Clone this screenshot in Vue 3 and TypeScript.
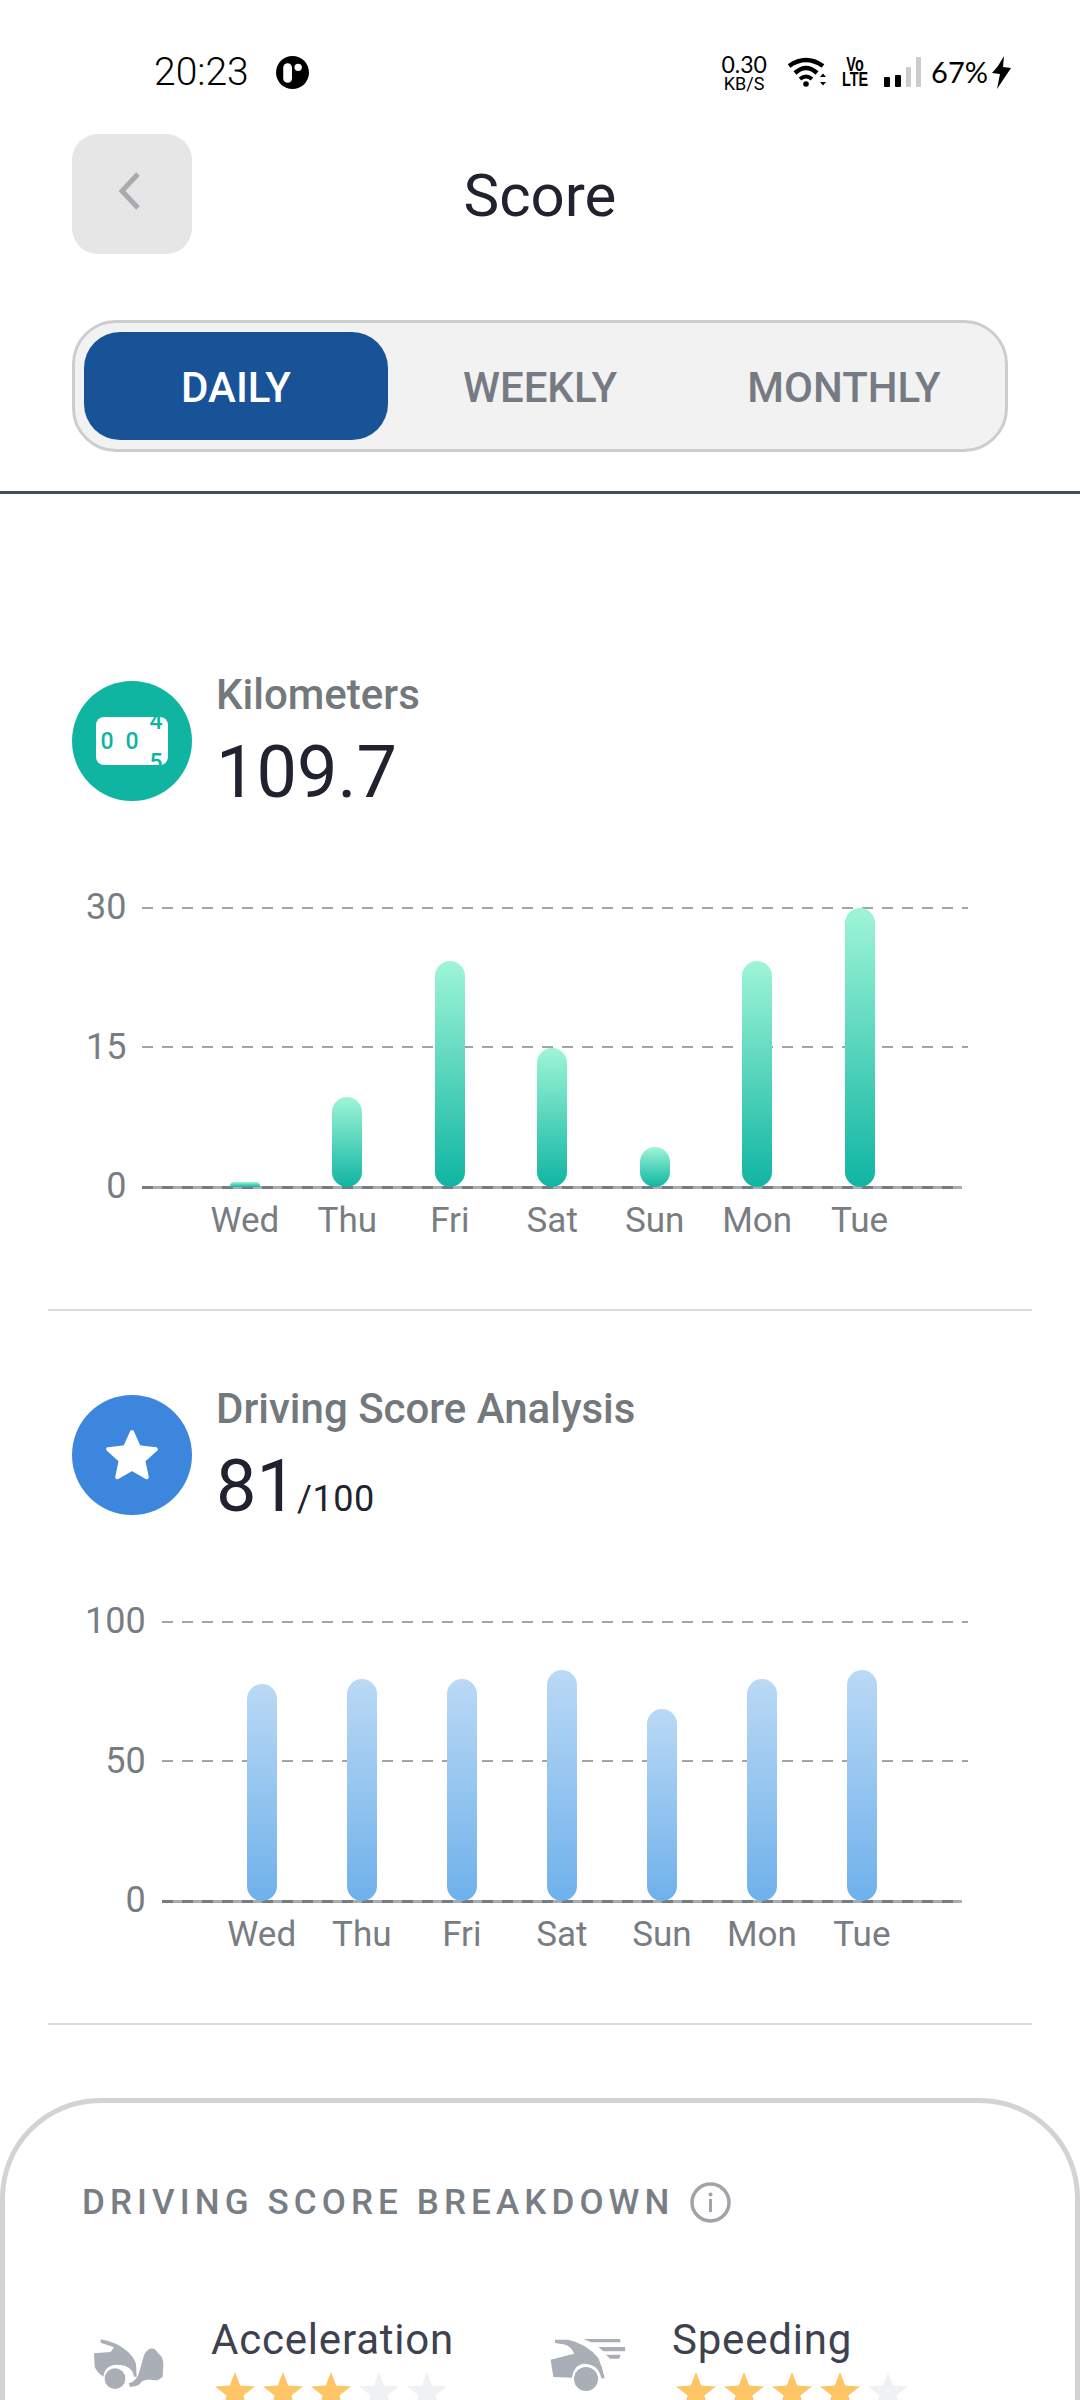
<script setup lang="ts">
interface Bar {
  day: string
  height: number
}

interface Section {
  label: string
  value: string
  unit?: string
  icon: 'odometer' | 'star'
  tone: 'teal' | 'blue'
  ticks: string[]
  bars: Bar[]
}

const tabs = ['DAILY', 'WEEKLY', 'MONTHLY']

const sections: Section[] = [
  {
    label: 'Kilometers',
    value: '109.7',
    icon: 'odometer',
    tone: 'teal',
    ticks: ['30', '15', '0'],
    bars: [
      { day: 'Wed', height: 5 },
      { day: 'Thu', height: 90 },
      { day: 'Fri', height: 226 },
      { day: 'Sat', height: 139 },
      { day: 'Sun', height: 40 },
      { day: 'Mon', height: 226 },
      { day: 'Tue', height: 279 }
    ]
  },
  {
    label: 'Driving Score Analysis',
    value: '81',
    unit: '/100',
    icon: 'star',
    tone: 'blue',
    ticks: ['100', '50', '0'],
    bars: [
      { day: 'Wed', height: 217 },
      { day: 'Thu', height: 222 },
      { day: 'Fri', height: 222 },
      { day: 'Sat', height: 231 },
      { day: 'Sun', height: 192 },
      { day: 'Mon', height: 222 },
      { day: 'Tue', height: 231 }
    ]
  }
]

const breakdown = [
  { name: 'Acceleration', stars: 3, icon: 'crash' },
  { name: 'Speeding', stars: 4, icon: 'speed' }
]
</script>

<template>
  <div class="page">
    <!-- Status bar -->
    <div class="status">
      <span class="time">20:23</span>
      <svg class="app-dot" viewBox="0 0 32 32">
        <circle cx="16" cy="16" r="16" fill="#000" />
        <rect x="7" y="7" width="8.5" height="19" rx="4.25" fill="#fff" />
        <circle cx="21.5" cy="11" r="3.6" fill="#fff" />
      </svg>
      <div class="status-right">
        <div class="speed">
          <span class="speed-num">0.30</span>
          <span class="speed-unit">KB/S</span>
        </div>
        <svg class="wifi" viewBox="0 0 40 30">
          <path d="M1 9 Q18 -3 35 9" fill="none" stroke="#000" stroke-width="4.5" />
          <path d="M7 16 Q18 6 29 16" fill="none" stroke="#000" stroke-width="4.5" />
          <path d="M12 22 Q18 17 24 22" fill="none" stroke="#000" stroke-width="4" />
          <circle cx="18" cy="27" r="2.8" fill="#000" />
          <path d="M32 20 L35 16.5 L38 20 Z M32 25 L35 28.5 L38 25 Z" fill="#000" />
        </svg>
        <div class="volte">
          <span>Vo</span>
          <span>LTE</span>
        </div>
        <div class="signal">
          <i class="s1"></i>
          <i class="s2"></i>
          <i class="s3"></i>
          <i class="s4"></i>
        </div>
        <span class="battery">67%</span>
        <svg class="bolt" viewBox="0 0 19 33">
          <path d="M12 0 L11 11 L19 12 L5 33 L8 18 L0 17 L6 10 Z" fill="#000" />
        </svg>
      </div>
    </div>

    <!-- Header -->
    <div class="header">
      <button class="back">
        <svg width="24" height="38" viewBox="0 0 24 38">
          <path d="M21 2 L5 19 L21 36" fill="none" stroke="#a7abb0" stroke-width="5" />
        </svg>
      </button>
      <h1 class="title">Score</h1>
    </div>

    <!-- Period tabs -->
    <div class="tabs">
      <div v-for="(tab, i) in tabs" :key="tab" class="tab" :class="{ active: i === 0 }">{{ tab }}</div>
    </div>
    <div class="rule"></div>

    <!-- Stat sections -->
    <section v-for="section in sections" :key="section.label" class="section">
      <div class="stat">
        <div class="stat-icon" :class="section.tone">
          <svg v-if="section.icon === 'odometer'" width="72" height="48" viewBox="0 0 72 48">
            <defs>
              <clipPath id="odo">
                <rect width="72" height="48" rx="8" />
              </clipPath>
            </defs>
            <g clip-path="url(#odo)">
              <rect width="72" height="48" fill="#fff" />
              <text x="11" y="32" class="odo-text">0</text>
              <text x="36" y="32" class="odo-text">0</text>
              <text x="60" y="12" class="odo-text">4</text>
              <text x="60" y="53" class="odo-text">5</text>
            </g>
          </svg>
          <svg v-else width="58" height="56" viewBox="0 0 56 54">
            <path
              d="M28 5 L34.6 19.6 L51 21.4 L38.8 32.2 L42.2 48.4 L28 40.2 L13.8 48.4 L17.2 32.2 L5 21.4 L21.4 19.6 Z"
              fill="#fff"
              stroke="#fff"
              stroke-width="4"
              stroke-linejoin="round"
            />
          </svg>
        </div>
        <div class="stat-text">
          <div class="stat-label">{{ section.label }}</div>
          <div class="stat-value">{{ section.value }}<span v-if="section.unit" class="stat-unit">{{ section.unit }}</span></div>
        </div>
      </div>

      <div class="chart" :class="section.tone">
        <div class="y-axis">
          <span v-for="tick in section.ticks" :key="tick" class="tick">{{ tick }}</span>
        </div>
        <div class="plot">
          <div class="grid-lines">
            <i class="grid-line"></i>
            <i class="grid-line"></i>
            <i class="grid-line base"></i>
          </div>
          <div class="bars">
            <div v-for="bar in section.bars" :key="bar.day" class="slot">
              <div class="bar" :class="{ tiny: bar.height < 10 }" :style="{ height: bar.height + 'px' }"></div>
            </div>
          </div>
        </div>
        <div class="x-axis">
          <span v-for="bar in section.bars" :key="bar.day" class="day">{{ bar.day }}</span>
        </div>
      </div>
      <div class="section-rule"></div>
    </section>

    <!-- Breakdown card -->
    <div class="card">
      <div class="card-title">
        <span>DRIVING SCORE BREAKDOWN</span>
        <svg width="41" height="41" viewBox="0 0 41 41">
          <circle cx="20.5" cy="20.5" r="18.5" fill="none" stroke="#a0a4a9" stroke-width="3.5" />
          <circle cx="20.5" cy="12.5" r="2" fill="#a0a4a9" />
          <rect x="19" y="17" width="3" height="13" fill="#a0a4a9" />
        </svg>
      </div>
      <div class="metrics">
        <div v-for="m in breakdown" :key="m.name" class="metric">
          <div class="metric-icon">
            <svg v-if="m.icon === 'crash'" width="70" height="52" viewBox="72 110 210 156">
              <path
                fill="#a9aeb7"
                d="M92 114 Q140 122 172 150 Q192 168 198 188 L200 226 L192 226 Q186 190 140 190 Q104 192 100 226 Q80 212 74 196 L72 156 L122 152 L132 138 L92 124 Z"
              />
              <circle cx="135" cy="232" r="31" fill="#a9aeb7" />
              <path
                fill="#a9aeb7"
                d="M208 212 L218 176 Q222 150 240 142 Q256 138 264 156 Q280 166 280 190 L278 226 Q264 240 246 236 Q232 232 216 240 Q206 258 180 256 L176 246 Q200 240 208 212 Z"
              />
            </svg>
            <svg v-else class="speed-car" width="75" height="54" viewBox="60 105 225 162">
              <path
                fill="#a9aeb7"
                d="M75 110 L115 110 Q170 122 205 165 Q218 195 224 226 L214 226 Q206 184 164 182 Q132 184 126 224 L70 222 L62 170 L120 155 L133 152 Q122 128 100 124 L75 120 Z"
              />
              <circle cx="168" cy="228" r="36" fill="#a9aeb7" />
              <path fill="#a9aeb7" d="M160 108 L270 108 L272 118 L184 118 Z M205 132 L285 132 L285 145 L220 145 Z M228 155 L272 155 L268 167 L240 167 Z" />
            </svg>
          </div>
          <div class="metric-body">
            <div class="metric-name">{{ m.name }}</div>
            <div class="stars">
              <svg v-for="n in 5" :key="n" class="star" :class="{ on: n <= m.stars }" viewBox="0 0 40 38">
                <path d="M20 0 L25.2 13.6 L40 14.5 L28.4 23.6 L32.4 38 L20 30 L7.6 38 L11.6 23.6 L0 14.5 L14.8 13.6 Z" />
              </svg>
            </div>
          </div>
        </div>
      </div>
    </div>
  </div>
</template>

<style>
html,
body {
  margin: 0;
  background: #fff;
}
</style>

<style scoped>
.page {
  width: 1080px;
  height: 2400px;
  overflow: hidden;
  background: #fff;
  font-family: Roboto, "Liberation Sans", sans-serif;
  color: #20232f;
}

/* status bar */
.status {
  height: 134px;
  box-sizing: border-box;
  padding: 50px 69px 0 154px;
  display: flex;
  align-items: flex-start;
}

.time {
  font-size: 39px;
  font-weight: 300;
  line-height: 44px;
  color: #000;
}

.app-dot {
  width: 33px;
  height: 33px;
  margin: 6px 0 0 27px;
}

.status-right {
  margin-left: auto;
  display: flex;
  align-items: flex-start;
}

.speed {
  width: 50px;
  display: flex;
  flex-direction: column;
  align-items: center;
  color: #000;
}

.speed-num {
  font-family: Lato, Roboto, sans-serif;
  font-size: 23px;
  line-height: 20px;
  margin-top: 4px;
}

.speed-unit {
  font-size: 18px;
  line-height: 16px;
  margin-top: 2px;
}

.wifi {
  width: 40px;
  height: 30px;
  margin: 7px 0 0 19px;
}

.volte {
  width: 24px;
  margin: 7px 0 0 15px;
  display: flex;
  flex-direction: column;
  align-items: center;
  font-family: "Liberation Sans", sans-serif;
  font-size: 20px;
  font-weight: 700;
  line-height: 15px;
  color: #000;
}

.volte span {
  transform: scaleX(0.72);
}

.signal {
  display: flex;
  align-items: flex-end;
  gap: 5px;
  height: 30px;
  margin: 7px 0 0 17px;
}

.signal i {
  display: block;
  width: 6px;
  border-radius: 1px;
  background: #000;
}

.signal .s1 {
  height: 10px;
}

.signal .s2 {
  height: 12px;
}

.signal .s3 {
  width: 5px;
  height: 20px;
  background: #ccc;
}

.signal .s4 {
  width: 5px;
  height: 30px;
  background: #ccc;
}

.battery {
  font-family: Lato, Roboto, sans-serif;
  font-size: 29px;
  line-height: 34px;
  margin: 5px 0 0 10px;
  color: #000;
}

.bolt {
  width: 19px;
  height: 33px;
  margin: 6px 0 0 4px;
}

/* header */
.header {
  display: grid;
  grid-template-columns: 120px 1fr 120px;
  align-items: center;
  padding: 0 72px;
  height: 120px;
}

.back {
  width: 120px;
  height: 120px;
  padding: 0;
  border: none;
  border-radius: 26px;
  background: #e6e6e6;
  display: flex;
  align-items: center;
  justify-content: center;
}

.back svg {
  margin: -6px 0 0 -6px;
}

.title {
  margin: 3px 0 0;
  text-align: center;
  font-size: 60px;
  font-weight: 400;
  line-height: 68px;
  color: #20232f;
}

/* tabs */
.tabs {
  margin: 66px 72px 0;
  height: 132px;
  box-sizing: border-box;
  padding: 9px;
  border: 3px solid #cdcdcd;
  border-radius: 44px;
  background: #f2f2f3;
  display: grid;
  grid-template-columns: repeat(3, 1fr);
}

.tab {
  padding-top: 2px;
  display: flex;
  align-items: center;
  justify-content: center;
  border-radius: 36px;
  font-size: 42px;
  font-weight: 500;
  color: #767b83;
}

.tab.active {
  background: #185398;
  color: #fff;
}

.rule {
  margin-top: 39px;
  height: 3px;
  background: #454d55;
}

/* stat section */
.section {
  padding-top: 84px;
}

.rule + .section {
  padding-top: 187px;
}

.stat {
  display: flex;
  gap: 24px;
  height: 120px;
  padding-left: 72px;
}

.stat-icon {
  width: 120px;
  height: 120px;
  flex: none;
  border-radius: 50%;
  display: flex;
  align-items: center;
  justify-content: center;
}

.stat-icon.teal {
  background: #10b5a2;
}

.stat-icon.blue {
  background: #3d86de;
}

.odo-text {
  font-family: Roboto, sans-serif;
  font-size: 23px;
  font-weight: 500;
  fill: #10b5a2;
  text-anchor: middle;
}

.stat-text {
  margin-top: -10px;
}

.stat-label {
  font-size: 42px;
  font-weight: 500;
  line-height: 48px;
  color: #73787d;
}

.stat-value {
  margin-top: 18px;
  font-size: 72px;
  line-height: 72px;
  color: #20232f;
}

.stat-unit {
  font-size: 36px;
  letter-spacing: 0.6px;
}

/* chart */
.chart {
  margin-top: 107px;
  padding: 0 118px 0 85px;
  display: grid;
  grid-template-columns: auto 1fr;
  column-gap: 16px;
}

.chart.teal {
  padding-left: 86px;
}

.y-axis {
  height: 279px;
  display: flex;
  flex-direction: column;
  justify-content: space-between;
  align-items: flex-end;
  transform: translateY(-1px);
}

.tick {
  height: 0;
  display: flex;
  align-items: center;
  font-size: 36px;
  color: #787d83;
}

.plot {
  position: relative;
  height: 279px;
}

.grid-lines {
  position: absolute;
  inset: 0;
  display: flex;
  flex-direction: column;
  justify-content: space-between;
}

.grid-line {
  display: block;
  height: 2px;
  margin: -1px -6px 0 0;
  background: repeating-linear-gradient(90deg, #a4a4a4 0 11px, transparent 11px 20px);
}

.grid-line.base {
  height: 3px;
  margin: 0 0 -2px;
  background: repeating-linear-gradient(90deg, #787c80 0 11px, #a9acb0 11px 20px);
}

.bars {
  position: relative;
  height: 100%;
  box-sizing: border-box;
  padding: 0 6.25%;
  display: flex;
  align-items: flex-end;
}

.slot {
  flex: 1;
  display: flex;
  justify-content: center;
}

.bar {
  width: 30px;
  border-radius: 15px;
}

.bar.tiny {
  border-radius: 4px 4px 0 0;
}

.teal .bar {
  background: linear-gradient(180deg, #9ff5d6, #0fb5a3);
}

.blue .bar {
  background: linear-gradient(180deg, #bad9f5, #6fb1eb);
}

.x-axis {
  grid-column: 2;
  height: 42px;
  margin-top: 13px;
  margin-bottom: -1px;
  padding: 0 6.25%;
  display: flex;
}

.day {
  flex: 1;
  text-align: center;
  font-size: 35px;
  line-height: 42px;
  color: #787d83;
}

.section-rule {
  margin: 68px 48px 0;
  height: 2px;
  background: #dcdcdc;
}

/* breakdown card */
.card {
  margin-top: 73px;
  height: 400px;
  box-sizing: border-box;
  padding: 79px 0 0 77px;
  border: 5px solid #d3d3d3;
  border-radius: 100px;
}

.card-title {
  display: flex;
  align-items: center;
  gap: 16px;
  height: 41px;
  font-size: 35px;
  font-weight: 500;
  letter-spacing: 5.1px;
  color: #797e85;
}

.metrics {
  margin-top: 93px;
  display: grid;
  grid-template-columns: 461px 1fr;
  padding-left: 12px;
}

.metric {
  display: flex;
}

.metric-icon {
  width: 117px;
  flex: none;
  padding-top: 22px;
}

.metric-icon svg {
  display: block;
}

.metric-icon .speed-car {
  margin-left: -5px;
}

.metric-name {
  font-size: 42px;
  line-height: 48px;
  letter-spacing: 0.8px;
  color: #3e4250;
}

.stars {
  margin: 8px 0 0 4px;
  display: flex;
  gap: 8px;
}

.star {
  width: 40px;
  height: 38px;
  fill: #f0f1f3;
}

.star.on {
  fill: #fec564;
}
</style>
